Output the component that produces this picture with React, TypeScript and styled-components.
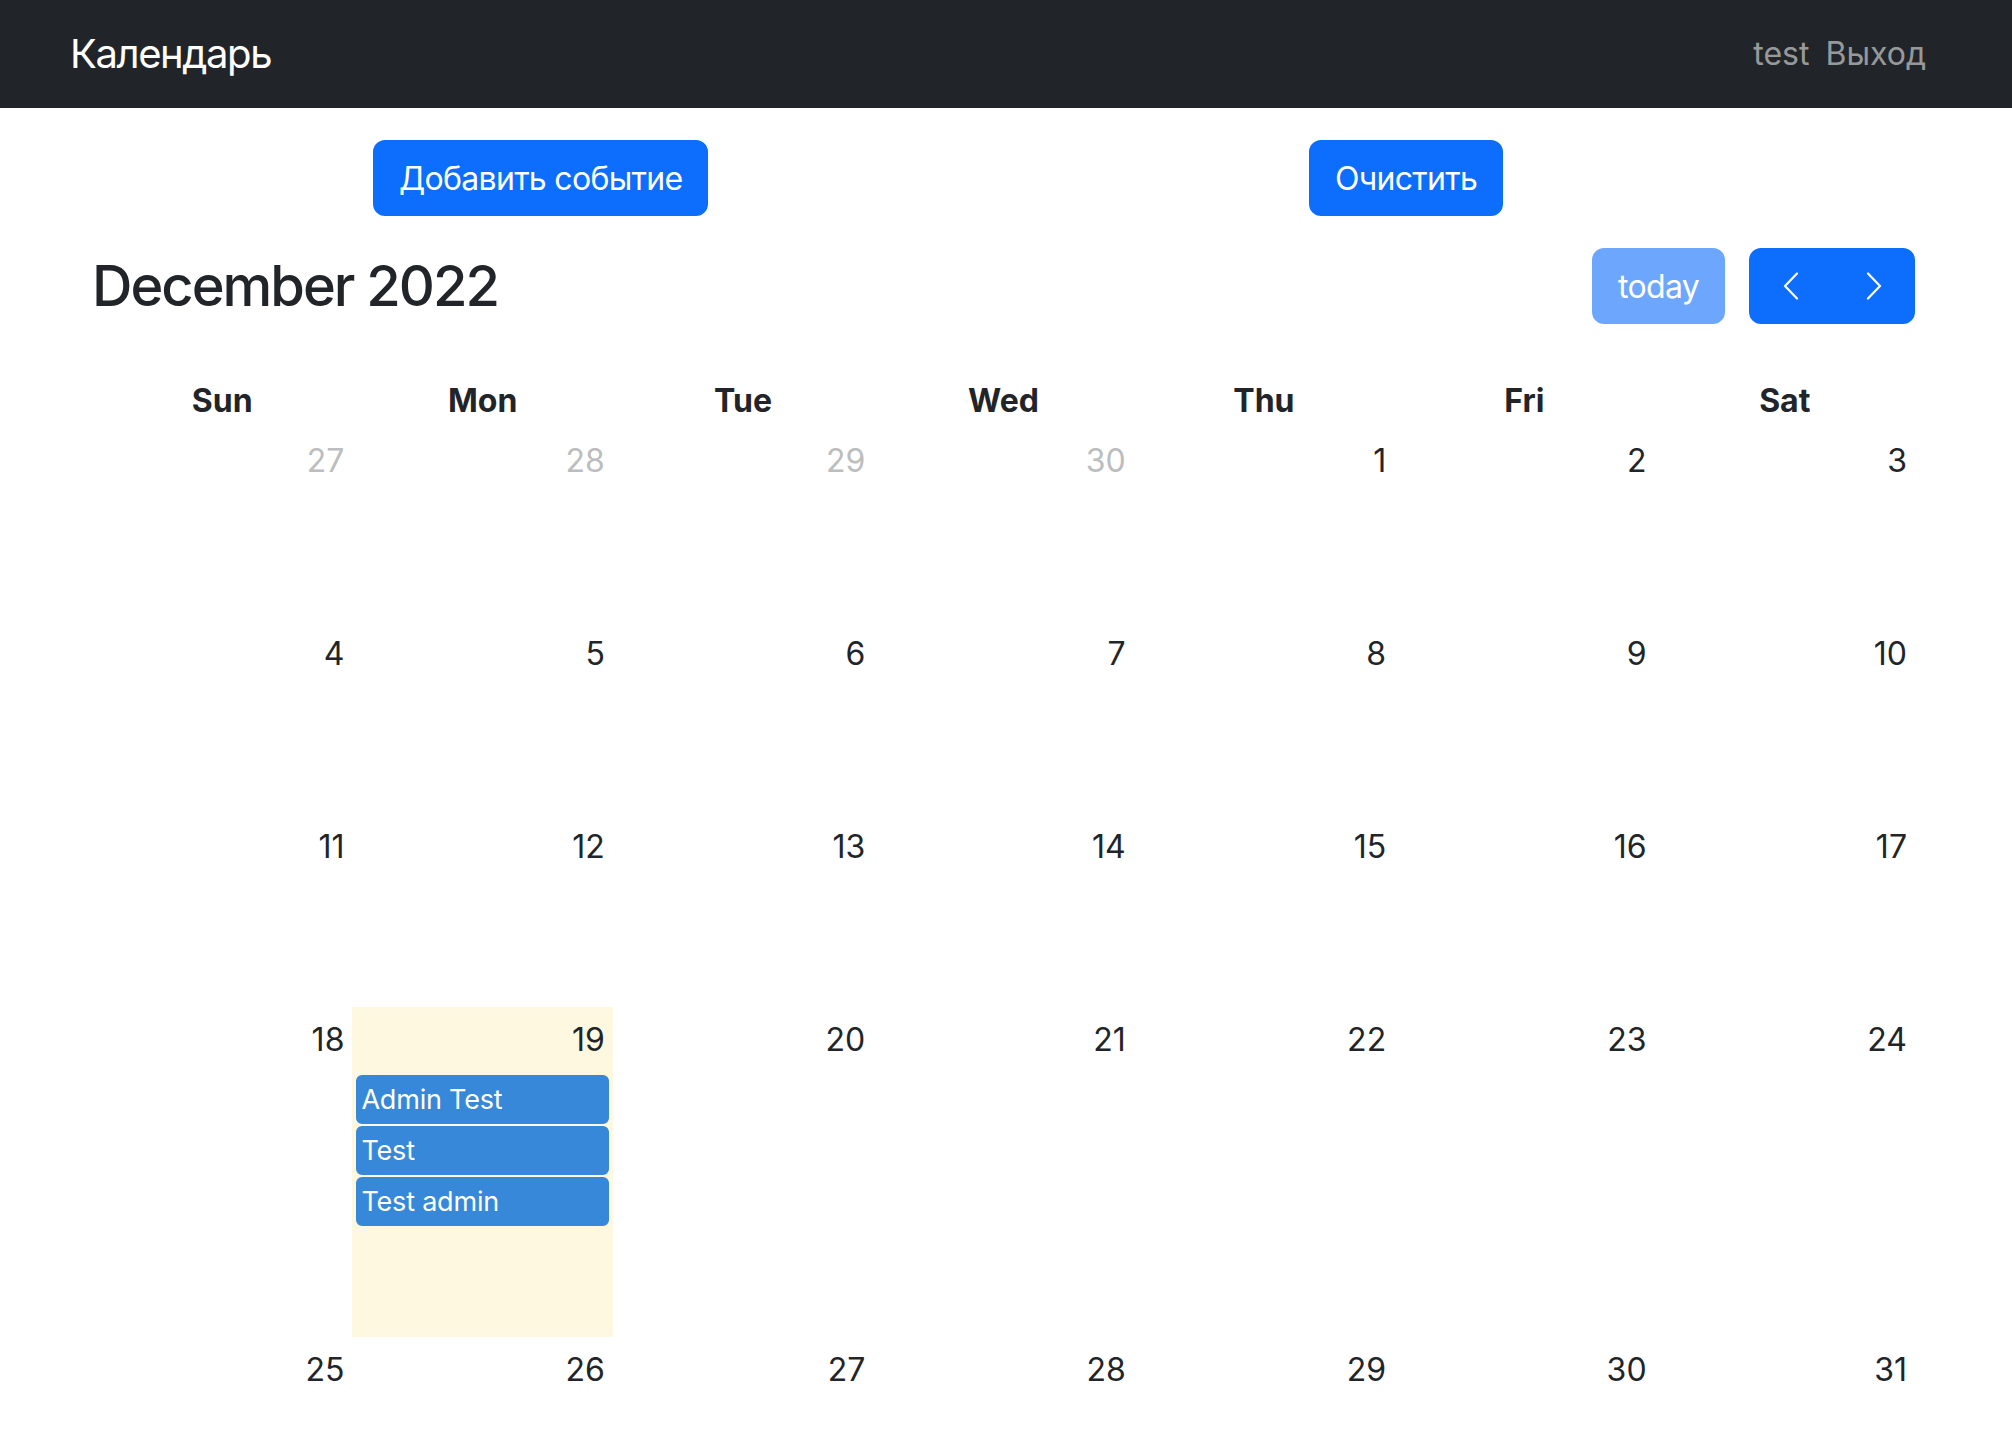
import React from 'react';
import styled, { createGlobalStyle } from 'styled-components';

const GlobalStyle = createGlobalStyle`
  html, body { margin: 0; padding: 0; background: #fff; }
  body {
    font-family: Inter, "Noto Sans", "Liberation Sans", sans-serif;
    color: #212529;
    font-size: 32px;
    line-height: 1.5;
    -webkit-font-smoothing: antialiased;
  }
  *, *::before, *::after { box-sizing: border-box; }
`;

const Navbar = styled.nav`
  height: 108px;
  background: #212529;
`;

const Container = styled.div`
  width: 1920px;
  margin: 0 auto;
  padding: 0 24px;
`;

const NavInner = styled(Container)`
  height: 100%;
  display: flex;
  align-items: center;
  justify-content: space-between;
`;

const Brand = styled.a`
  font-size: 40px;
  line-height: 60px;
  letter-spacing: -1.4px;
  color: #fff;
  text-decoration: none;
`;

const NavRight = styled.div`
  display: flex;
  align-items: center;
`;

const NavText = styled.span`
  color: rgba(255, 255, 255, 0.55);
  font-size: 32px;
`;

const NavLink = styled.a`
  color: rgba(255, 255, 255, 0.55);
  font-size: 32px;
  padding: 0 16px;
  text-decoration: none;
`;

const ActionsRow = styled.div`
  display: grid;
  grid-template-columns: 1fr 1fr;
  margin-top: 32px;
`;

const ActionCol = styled.div`
  padding-left: 303px;
`;

const Button = styled.button<{ $dim?: boolean }>`
  font-family: inherit;
  font-size: 32px;
  line-height: 48px;
  letter-spacing: -0.7px;
  padding: 13px 24px 11px;
  color: #fff;
  background: #0d6efd;
  border: 2px solid #0d6efd;
  border-radius: 12px;
  opacity: ${(p) => (p.$dim ? 0.6 : 1)};
  cursor: pointer;
  display: inline-flex;
  align-items: center;
  justify-content: center;
`;

const Calendar = styled.div`
  margin-top: 32px;
  padding: 0 27px 0 22px;
`;

const Toolbar = styled.div`
  display: flex;
  justify-content: space-between;
  align-items: center;
  margin-bottom: 48px;
`;

const Title = styled.h2`
  margin: 0;
  padding-top: 2px;
  font-size: 56px;
  font-weight: 500;
  line-height: 1.2;
  letter-spacing: -2px;
`;

const ToolbarRight = styled.div`
  display: flex;
  gap: 24px;
`;

const ButtonGroup = styled.div`
  display: flex;
`;

const GroupButton = styled(Button)<{ $pos: 'first' | 'last' }>`
  width: 83px;
  height: 76px;
  padding: 0;
  border-radius: ${(p) => (p.$pos === 'first' ? '12px 0 0 12px' : '0 12px 12px 0')};
`;

const Grid = styled.div`
  display: grid;
  grid-template-columns: repeat(7, 1fr);
`;

const HeaderCell = styled.div`
  height: 56px;
  padding: 5px 4px 3px;
  text-align: center;
  font-weight: 700;
  font-size: 32px;
  line-height: 48px;
`;

const DayCell = styled.div<{ $today?: boolean; $h: number }>`
  height: ${(p) => p.$h}px;
  background: ${(p) => (p.$today ? '#fff8e1' : 'transparent')};
  display: flex;
  flex-direction: column;
`;

const DayNumber = styled.div<{ $muted?: boolean }>`
  padding: 9px 8px 0;
  text-align: right;
  line-height: 48px;
  font-size: 32px;
  color: ${(p) => (p.$muted ? '#bcbdbe' : '#212529')};
`;

const Events = styled.div`
  padding: 11px 4px 0;
  display: flex;
  flex-direction: column;
  gap: 2px;
`;

const EventItem = styled.div`
  height: 49px;
  background: #3788d8;
  border: 2px solid #3788d8;
  border-radius: 6px;
  color: #fff;
  font-size: 27px;
  letter-spacing: -0.2px;
  padding: 1px 3px 0;
  display: flex;
  align-items: center;
  white-space: nowrap;
  overflow: hidden;
`;

const Chevron = ({ dir }: { dir: 'left' | 'right' }) => (
  <svg width="16" height="28" viewBox="0 0 16 28" fill="none">
    <polyline
      points={dir === 'left' ? '14,1.5 2,14 14,26.5' : '2,1.5 14,14 2,26.5'}
      stroke="#fff"
      strokeWidth="2.2"
      strokeLinecap="round"
      strokeLinejoin="round"
    />
  </svg>
);

type Day = { n: number; muted?: boolean; today?: boolean; events?: string[] };

const weeks: Day[][] = (() => {
  const res: Day[][] = [];
  const cells: Day[] = [];
  [27, 28, 29, 30].forEach((n) => cells.push({ n, muted: true }));
  for (let d = 1; d <= 31; d++) {
    cells.push({
      n: d,
      today: d === 19,
      events: d === 19 ? ['Admin Test', 'Test', 'Test admin'] : undefined,
    });
  }
  for (let i = 0; i < 5; i++) res.push(cells.slice(i * 7, i * 7 + 7));
  return res;
})();

const heads = ['Sun', 'Mon', 'Tue', 'Wed', 'Thu', 'Fri', 'Sat'];

export default function App() {
  return (
    <>
      <GlobalStyle />
      <Navbar>
        <NavInner>
          <Brand href="#">Календарь</Brand>
          <NavRight>
            <NavText>test</NavText>
            <NavLink href="#">Выход</NavLink>
          </NavRight>
        </NavInner>
      </Navbar>
      <Container>
        <ActionsRow>
          <ActionCol>
            <Button>Добавить событие</Button>
          </ActionCol>
          <ActionCol>
            <Button>Очистить</Button>
          </ActionCol>
        </ActionsRow>
        <Calendar>
          <Toolbar>
            <Title>December 2022</Title>
            <ToolbarRight>
              <Button $dim>today</Button>
              <ButtonGroup>
                <GroupButton $pos="first" aria-label="prev">
                  <Chevron dir="left" />
                </GroupButton>
                <GroupButton $pos="last" aria-label="next">
                  <Chevron dir="right" />
                </GroupButton>
              </ButtonGroup>
            </ToolbarRight>
          </Toolbar>
          <Grid>
            {heads.map((h) => (
              <HeaderCell key={h}>{h}</HeaderCell>
            ))}
          </Grid>
          {weeks.map((w, wi) => {
            const h = w.some((d) => d.events) ? 330 : 193;
            return (
              <Grid key={wi}>
                {w.map((d, di) => (
                  <DayCell key={di} $today={d.today} $h={h}>
                    <DayNumber $muted={d.muted}>{d.n}</DayNumber>
                    {d.events && (
                      <Events>
                        {d.events.map((e) => (
                          <EventItem key={e}>{e}</EventItem>
                        ))}
                      </Events>
                    )}
                  </DayCell>
                ))}
              </Grid>
            );
          })}
        </Calendar>
      </Container>
    </>
  );
}
